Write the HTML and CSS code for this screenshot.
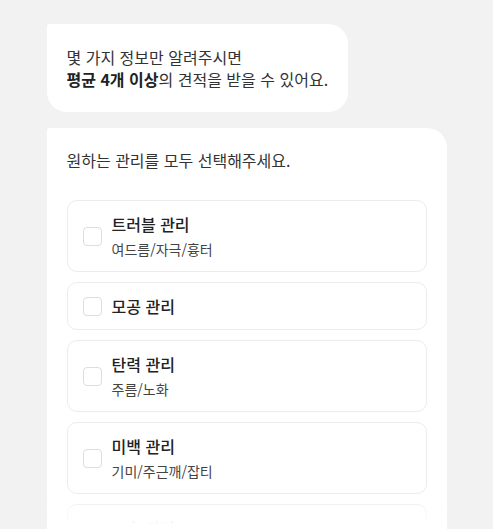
FILE: index.html
```html
<!DOCTYPE html>
<html lang="ko">
<head>
    <meta charset="UTF-8">
    <meta name="viewport" content="width=device-width, initial-scale=1.0">
    <title>관리 선택</title>
    <link rel="stylesheet" href="styles.css">
</head>
<body>
    <div class="chat">
        <div class="bubble">
            <p>몇 가지 정보만 알려주시면</p>
            <p><strong>평균 4개 이상</strong>의 견적을 받을 수 있어요.</p>
        </div>

        <div class="card">
            <h2 class="card-title">원하는 관리를 모두 선택해주세요.</h2>
            <ul class="options">
                <li class="option">
                    <span class="checkbox"></span>
                    <div class="option-text">
                        <div class="option-name">트러블 관리</div>
                        <div class="option-desc">여드름/자극/흉터</div>
                    </div>
                </li>
                <li class="option">
                    <span class="checkbox"></span>
                    <div class="option-text">
                        <div class="option-name">모공 관리</div>
                    </div>
                </li>
                <li class="option">
                    <span class="checkbox"></span>
                    <div class="option-text">
                        <div class="option-name">탄력 관리</div>
                        <div class="option-desc">주름/노화</div>
                    </div>
                </li>
                <li class="option">
                    <span class="checkbox"></span>
                    <div class="option-text">
                        <div class="option-name">미백 관리</div>
                        <div class="option-desc">기미/주근깨/잡티</div>
                    </div>
                </li>
                <li class="option">
                    <span class="checkbox"></span>
                    <div class="option-text">
                        <div class="option-name">보습 관리</div>
                        <div class="option-desc">건조/각질</div>
                    </div>
                </li>
            </ul>
        </div>
    </div>
    <div class="fade"></div>
</body>
</html>
```

FILE: styles.css
```css
html, body {
    height: 100%;
    overflow: hidden;
}

body {
    margin: 0;
    background-color: #f2f2f2;
    font-family: "Noto Sans CJK KR", "Noto Sans", sans-serif;
    color: #333333;
}

.chat {
    width: 400px;
    margin: 0 auto;
    padding-top: 24px;
    display: flex;
    flex-direction: column;
    align-items: flex-start;
    gap: 16px;
}

.bubble {
    background-color: #ffffff;
    border-radius: 3px 20px 20px 20px;
    padding: 22px 20px;
    font-size: 16px;
    line-height: 22px;
}

.bubble p {
    margin: 0;
}

.bubble strong {
    font-weight: 700;
    color: #222222;
}

.card {
    align-self: stretch;
    background-color: #ffffff;
    border-radius: 3px 20px 0 0;
    padding: 20px 20px 40px;
}

.card-title {
    margin: 0 0 28px;
    font-size: 16px;
    font-weight: 400;
    line-height: 24px;
    color: #333333;
}

.options {
    list-style: none;
    margin: 0;
    padding: 0;
    display: flex;
    flex-direction: column;
    gap: 10px;
}

.option {
    display: flex;
    align-items: center;
    gap: 10px;
    padding: 12px 15px;
    border: 1px solid #ececec;
    border-radius: 10px;
}

.checkbox {
    width: 17px;
    height: 17px;
    border: 1.5px solid #dddddd;
    border-radius: 4px;
    flex-shrink: 0;
}

.option-name {
    font-size: 16px;
    font-weight: 500;
    line-height: 22px;
    color: #222222;
}

.option-desc {
    margin-top: 4px;
    font-size: 14px;
    line-height: 20px;
    color: #444444;
}

.fade {
    position: fixed;
    left: 0;
    right: 0;
    bottom: 0;
    height: 34px;
    background: linear-gradient(rgba(255, 255, 255, 0), #ffffff 85%);
    width: 400px;
    margin: 0 auto;
}
```
